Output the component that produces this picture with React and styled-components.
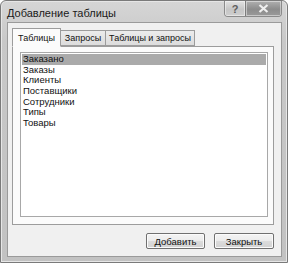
import React, { useState } from 'react';
import styled, { createGlobalStyle } from 'styled-components';

const Global = createGlobalStyle`
    html, body {
        margin: 0;
        padding: 0;
        background: #ffffff;
    }
    body {
        font-family: 'Liberation Sans', Arial, sans-serif;
    }
`;

const Window = styled.div`
    width: 288px;
    height: 263px;
    box-sizing: border-box;
    display: flex;
    flex-direction: column;
    background: linear-gradient(#d6d6d6, #c8c8c8 40px, #c2c2c2);
    border: 1px solid #7a7a7a;
    border-radius: 6px 6px 0 0;
    box-shadow: inset 0 0 0 1px #e6e6e6;
`;

const TitleBar = styled.div`
    height: 21px;
    display: flex;
    align-items: flex-start;
    justify-content: space-between;
    padding-left: 6px;
`;

const Title = styled.span`
    margin-top: 6px;
    font-size: 11px;
    color: #1a1a1a;
`;

const Caption = styled.div`
    display: flex;
    margin-right: 5px;
    border: 1px solid #8a8a8a;
    border-top: none;
    border-radius: 0 0 4px 4px;
    overflow: hidden;
    height: 15px;
`;

const CaptionButton = styled.div`
    width: ${(p) => p.w}px;
    flex: none;
    display: flex;
    align-items: center;
    justify-content: center;
    background: ${(p) =>
        p.close
            ? 'linear-gradient(#b0b0b0, #8c8c8c 55%, #9a9a9a)'
            : 'linear-gradient(#e2e2e2, #c6c6c6 55%, #cecece)'};
    border-left: ${(p) => (p.close ? '1px solid #7c7c7c' : 'none')};
    box-shadow: inset 0 0 0 1px rgba(255, 255, 255, 0.45);
    font-size: 11px;
    font-weight: bold;
    color: #5e5e5e;
`;

const Client = styled.div`
    flex: 1;
    margin: 0 5px 5px 6px;
    background: #f0f0f0;
    border: 1px solid #9a9a9a;
    display: flex;
    flex-direction: column;
    padding: 4px 7px 0 4px;
`;

const Tabs = styled.div`
    display: flex;
    align-items: flex-end;
    height: 19px;
    position: relative;
    z-index: 1;
`;

const Tab = styled.div`
    width: ${(p) => p.w}px;
    height: ${(p) => (p.active ? 19 : 16)}px;
    box-sizing: border-box;
    margin-right: -1px;
    display: flex;
    align-items: center;
    justify-content: center;
    font-size: 9px;
    color: #111;
    white-space: nowrap;
    background: ${(p) => (p.active ? '#fbfbfb' : 'linear-gradient(#ececec, #dcdcdc)')};
    border: 1px solid #9c9c9c;
    border-bottom: ${(p) => (p.active ? '1px solid #fbfbfb' : '1px solid #9c9c9c')};
    margin-bottom: ${(p) => (p.active ? -1 : 0)}px;
    cursor: default;
`;

const Panel = styled.div`
    height: 179px;
    box-sizing: border-box;
    background: #fbfbfb;
    border: 1px solid #9c9c9c;
    padding: 5px 5px 7px 7px;
    display: flex;
`;

const List = styled.div`
    flex: 1;
    background: #ffffff;
    border: 1px solid #a8a8a8;
    padding: 1px;
`;

const Item = styled.div`
    height: 10.7px;
    line-height: 10.7px;
    font-size: 9.5px;
    padding-left: 1px;
    color: #111;
    background: ${(p) => (p.selected ? '#aaaaaa' : 'transparent')};
    white-space: nowrap;
`;

const Footer = styled.div`
    display: flex;
    justify-content: flex-end;
    gap: 9px;
    padding: 8px 0 0 0;
`;

const Button = styled.button`
    width: ${(p) => p.w}px;
    height: 16px;
    padding: 0;
    font-family: inherit;
    font-size: 9.5px;
    color: #111;
    background: linear-gradient(#f4f4f4, #ebebeb 50%, #dcdcdc 51%, #d2d2d2);
    border: 1px solid #707070;
    border-radius: 2px;
    box-shadow: inset 0 0 0 1px #fbfbfb;
`;

const tabs = [
    { title: 'Таблицы', w: 49 },
    { title: 'Запросы', w: 46 },
    { title: 'Таблицы и запросы', w: 90 },
];

const tables = ['Заказано', 'Заказы', 'Клиенты', 'Поставщики', 'Сотрудники', 'Типы', 'Товары'];

export default function App() {
    const [tab, setTab] = useState(0);
    const [selected, setSelected] = useState(0);

    return (
        <>
            <Global />
            <Window>
                <TitleBar>
                    <Title>Добавление таблицы</Title>
                    <Caption>
                        <CaptionButton w={20}>?</CaptionButton>
                        <CaptionButton w={35} close>
                            <svg width="11" height="9" viewBox="0 0 11 9">
                                <path
                                    d="M1.5 1 L9.5 8 M9.5 1 L1.5 8"
                                    stroke="#efefef"
                                    strokeWidth="2.2"
                                />
                            </svg>
                        </CaptionButton>
                    </Caption>
                </TitleBar>
                <Client>
                    <Tabs>
                        {tabs.map((t, i) => (
                            <Tab
                                key={t.title}
                                w={t.w}
                                active={tab === i}
                                onClick={() => setTab(i)}>
                                {t.title}
                            </Tab>
                        ))}
                    </Tabs>
                    <Panel>
                        <List>
                            {tables.map((t, i) => (
                                <Item
                                    key={t}
                                    selected={selected === i}
                                    onClick={() => setSelected(i)}>
                                    {t}
                                </Item>
                            ))}
                        </List>
                    </Panel>
                    <Footer>
                        <Button w={59}>Добавить</Button>
                        <Button w={60}>Закрыть</Button>
                    </Footer>
                </Client>
            </Window>
        </>
    );
}
